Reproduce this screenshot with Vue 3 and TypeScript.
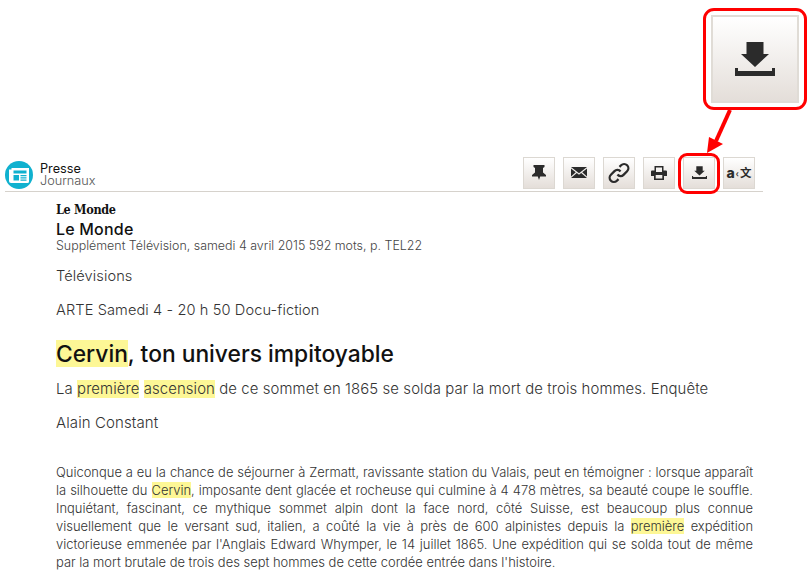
<script setup lang="ts">
const tools = ['pin', 'mail', 'link', 'print', 'dl', 'tr']
const lines: { parts: [string, boolean][]; last?: boolean }[] = [
  { parts: [["Quiconque a eu la chance de séjourner à Zermatt, ravissante station du Valais, peut en témoigner : lorsque apparaît", false]] },
  { parts: [["la silhouette du ", false], ["Cervin", true], [", imposante dent glacée et rocheuse qui culmine à 4 478 mètres, sa beauté coupe le souffle.", false]] },
  { parts: [["Inquiétant, fascinant, ce mythique sommet alpin dont la face nord, côté Suisse, est beaucoup plus connue", false]] },
  { parts: [["visuellement que le versant sud, italien, a coûté la vie à près de 600 alpinistes depuis la ", false], ["première", true], [" expédition", false]] },
  { parts: [["victorieuse emmenée par l'Anglais Edward Whymper, le 14 juillet 1865. Une expédition qui se solda tout de même", false]] },
  { parts: [["par la mort brutale de trois des sept hommes de cette cordée entrée dans l'histoire.", false]], last: true },
]
const dlPath = 'M11.500 0h17v12H34L20 25 6 12h5.500zM0 26h3v3h34v-3h3v8H0z'
</script>

<template>
  <div class="page">
    <div class="callout">
      <div class="bigbtn">
        <svg class="bigicon" viewBox="0 0 40 34" width="40" height="34"><path :d="dlPath" fill="#2b2b2b"/></svg>
      </div>
    </div>
    <svg class="arrow" width="40" height="50" viewBox="0 0 40 50">
      <line x1="31" y1="1" x2="17" y2="32" stroke="#f00" stroke-width="4"/>
      <path d="M8 44 L10 28 L24 35 Z" fill="#f00"/>
    </svg>
    <header class="bar">
      <div class="cat">
        <span class="badge">
          <svg viewBox="0 0 20 15" width="20" height="15"><path d="M0 1.500h2.500V0H20v13.500a1.500 1.500 0 0 1-1.500 1.500H2a2 2 0 0 1-2-2z" fill="#fff"/><path d="M4.500 2.500h13v3h-13zM4.500 7h5.500v5.500H4.500zM11.500 7h6v1.300h-6zM11.500 9.300h6v1.300h-6zM11.500 11.500h6v1.200h-6z" fill="#10b1cf"/></svg>
        </span>
        <div class="cat-t"><div class="c1">Presse</div><div class="c2">Journaux</div></div>
      </div>
      <div class="tools">
        <button v-for="t in tools" :key="t" class="tool" :class="{ ring: t === 'dl' }">
          <svg v-if="t === 'pin'" viewBox="0 0 14 15" width="14" height="15"><path d="M1.500 0h11v2L11 3v4.500l3 2.500v1.500H8.200L7 15l-1.200-3.500H0V10l3-2.500V3L1.500 2z" fill="#2b2b2b"/></svg>
          <svg v-else-if="t === 'mail'" viewBox="0 0 16 11" width="16" height="11"><path d="M0 0h16L8 6.300zM0 1.500l4.800 3.800L0 9.500zM16 1.500l-4.800 3.800L16 9.500zM5.800 6.100 8 7.800l2.200-1.700L16 11H0z" fill="#2b2b2b"/></svg>
          <svg v-else-if="t === 'link'" viewBox="0 0 24 24" width="24" height="24" fill="none" stroke="#2b2b2b" stroke-width="2.300"><path d="M10.500 13.500a4 4 0 0 0 6 .4l3.600-3.600a4.200 4.200 0 0 0-6-6l-1.600 1.600"/><path d="M13.500 10.500a4 4 0 0 0-6-.4l-3.600 3.600a4.200 4.200 0 0 0 6 6l1.600-1.600"/></svg>
          <svg v-else-if="t === 'print'" viewBox="0 0 16 14" width="16" height="14"><path fill-rule="evenodd" d="M3.500 0h9v4.500H15a1 1 0 0 1 1 1V10h-3v4H3v-4H0V5.500a1 1 0 0 1 1-1h2.500zM5 1.500V6h6V1.500zM4.700 9v3.500h6.600V9z" fill="#2b2b2b"/></svg>
          <svg v-else-if="t === 'dl'" viewBox="0 0 40 34" width="15" height="13"><path :d="dlPath" fill="#2b2b2b"/></svg>
          <span v-else class="trans"><b class="ta">a</b><i>‹</i><b>文</b></span>
        </button>
      </div>
    </header>
    <main class="doc">
      <div class="logo">Le Monde</div>
      <div class="src">Le Monde</div>
      <div class="meta">Supplément Télévision, samedi 4 avril 2015 592 mots, p. TEL22</div>
      <p class="line first">Télévisions</p>
      <p class="line second">ARTE Samedi 4 - 20 h 50 Docu-fiction</p>
      <h1><mark>Cervin</mark>, ton univers impitoyable</h1>
      <p class="line sub">La <mark>première</mark> <mark>ascension</mark> de ce sommet en 1865 se solda par la mort de trois hommes. Enquête</p>
      <p class="line author">Alain Constant</p>
      <div class="body">
        <div v-for="(l, i) in lines" :key="i" class="bl" :class="{ last: l.last }">
          <template v-for="(p, j) in l.parts" :key="j"><mark v-if="p[1]">{{ p[0] }}</mark><template v-else>{{ p[0] }}</template></template>
        </div>
      </div>
    </main>
  </div>
</template>

<style>
html, body { margin: 0; background: #fff; }
</style>

<style scoped>
.page { position: relative; width: 811px; height: 577px; overflow: hidden; font-family: "Inter", "Open Sans", sans-serif; color: #444; padding-top: 156px; box-sizing: border-box; }
.callout { position: absolute; left: 703px; top: 8px; width: 104px; height: 102px; box-sizing: border-box; border: 3px solid #f00; border-radius: 11px; background: #fff; display: flex; align-items: center; justify-content: center; }
.bigbtn { width: 88px; height: 88px; box-sizing: border-box; border: 2px solid #e0dcd6; background: linear-gradient(#fff, #e4ded9); display: flex; align-items: center; justify-content: center; }
.bigicon { filter: blur(0.4px); }
.arrow { position: absolute; left: 699px; top: 109px; }
.bar { margin-left: 5px; width: 758px; height: 36px; padding-right: 8px; border-bottom: 1px solid #d6d2cc; display: flex; justify-content: space-between; align-items: center; box-sizing: border-box; }
.cat { display: flex; align-items: center; gap: 7px; margin-top: 3px; }
.badge { width: 28px; height: 28px; border-radius: 50%; background: #10b1cf; display: flex; align-items: center; justify-content: center; }
.cat-t { font-size: 12.700px; line-height: 12px; }
.c1 { color: #111; }
.c2 { color: #555; font-weight: 300; }
.tools { display: flex; gap: 8px; align-items: center; margin-top: -2px; }
.tool { width: 32px; height: 32px; padding: 0; border: 1px solid #dcd8d2; background: linear-gradient(#fff, #e4ded9); display: flex; align-items: center; justify-content: center; position: relative; }
.ring::after { content: ""; position: absolute; left: -6px; top: -5px; width: 36px; height: 35px; border: 3px solid #f00; border-radius: 9px; }
.trans { display: flex; align-items: center; font-size: 11.500px; line-height: 1; color: #2b2b2b; font-style: normal; font-family: "Noto Sans CJK SC", sans-serif; }
.trans .ta { font-size: 14px; font-family: "Inter", sans-serif; font-weight: 800; }
.trans i { font-style: normal; font-size: 10px; font-weight: 700; margin: 0 1px; }
.doc { padding-left: 56px; width: 697px; }
.logo { font-family: "DejaVu Serif", serif; font-stretch: condensed; font-weight: 700; font-size: 12.500px; line-height: 20px; color: #111; margin-top: 8px; letter-spacing: -0.3px; }
.src { font-size: 16px; font-weight: 500; line-height: 18px; color: #111; letter-spacing: .2px; }
.meta { font-size: 12.450px; font-weight: 300; line-height: 16px; color: #444; }
.line { margin: 0; font-size: 14.600px; font-weight: 300; line-height: 20px; color: #333; letter-spacing: .1px; }
.first { margin-top: 12px; }
.second { margin-top: 14px; }
h1 { margin: 21px 0 0; font-size: 22.800px; font-weight: 500; line-height: 26px; color: #111; }
.line.sub { margin-top: 12px; font-size: 14.900px; }
.line.author { margin-top: 14px; font-size: 15px; }
.body { margin-top: 30px; font-size: 12.950px; font-weight: 300; line-height: 18px; color: #333; }
.bl { text-align: justify; text-align-last: justify; white-space: nowrap; }
.bl.last { text-align-last: left; }
mark { background: #fdf796; color: inherit; }
</style>
